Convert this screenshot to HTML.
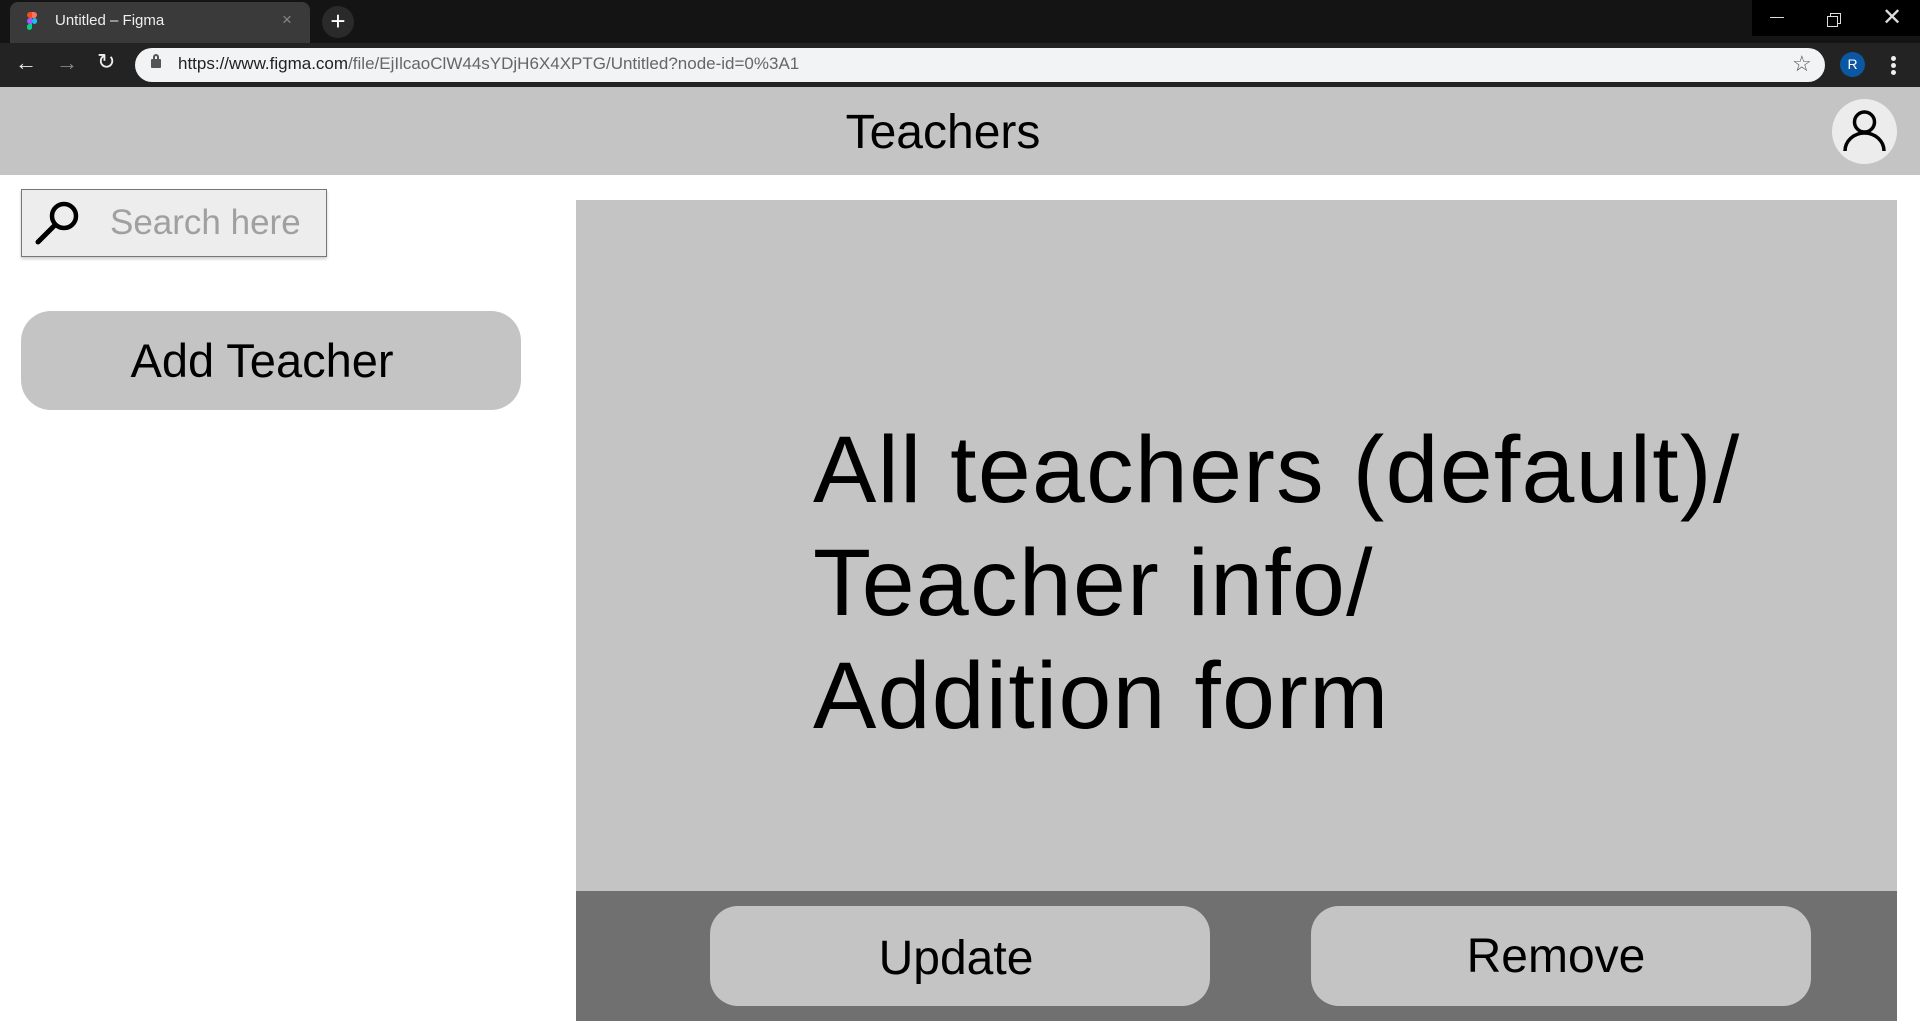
<!DOCTYPE html>
<html><head><meta charset="utf-8"><style>
*{margin:0;padding:0;box-sizing:border-box}
body{width:1920px;height:1032px;background:#fff;font-family:"Liberation Sans",Arial,sans-serif;position:relative;overflow:hidden}
.abs{position:absolute}
</style></head><body>
<div class="abs" style="left:0;top:0;width:1920px;height:43px;background:#141414"></div>
<div class="abs" style="left:10px;top:2px;width:300px;height:41px;background:#3a3a3a;border-radius:8px 8px 0 0"></div>
<div class="abs" style="left:27px;top:12px;width:10px;height:18px">
<div class="abs" style="left:0;top:0;width:5px;height:6px;background:#f24e1e;border-radius:3px 0 0 3px"></div>
<div class="abs" style="left:5px;top:0;width:5px;height:6px;background:#ff7262;border-radius:0 3px 3px 0"></div>
<div class="abs" style="left:0;top:6px;width:5px;height:6px;background:#a259ff;border-radius:3px 0 0 3px"></div>
<div class="abs" style="left:5px;top:6px;width:5px;height:6px;background:#1abcfe;border-radius:3px"></div>
<div class="abs" style="left:0;top:12px;width:5px;height:6px;background:#0acf83;border-radius:3px 0 3px 3px"></div>
</div>
<div class="abs" style="left:55px;top:12px;color:#eee;font-size:15px">Untitled – Figma</div>
<div class="abs" style="left:282px;top:10px;color:#888;font-size:17px">×</div>
<div class="abs" style="left:322px;top:6px;width:32px;height:32px;border-radius:16px;background:#2a2a2a;color:#fff;font-size:26px;text-align:center;line-height:30px">+</div>
<div class="abs" style="left:1752px;top:0;width:168px;height:36px;background:#000"></div>
<div class="abs" style="left:1770px;top:17px;width:14px;height:1px;background:#ddd"></div>
<div class="abs" style="left:1830px;top:13px;width:11px;height:11px;border:1px solid #ddd;background:#000"></div>
<div class="abs" style="left:1827px;top:16px;width:11px;height:11px;border:1px solid #ddd;background:#000"></div>
<div class="abs" style="left:1882px;top:3px;color:#ddd;font-size:24px">✕</div>
<div class="abs" style="left:0;top:43px;width:1920px;height:44px;background:#232323"></div>
<div class="abs" style="left:15px;top:50px;color:#eee;font-size:22px">←</div>
<div class="abs" style="left:56px;top:50px;color:#888;font-size:22px">→</div>
<div class="abs" style="left:97px;top:49px;color:#eee;font-size:22px">↻</div>
<div class="abs" style="left:135px;top:48px;width:1690px;height:34px;background:#f1f3f4;border-radius:17px"></div>
<div class="abs" style="left:151px;top:59px;width:10px;height:9px;background:#555;border-radius:1px"></div>
<div class="abs" style="left:153px;top:54px;width:6px;height:7px;border:2px solid #555;border-radius:3px 3px 0 0"></div>
<div class="abs" style="left:178px;top:54px;font-size:17px;color:#222">https://www.figma.com<span style="color:#666">/file/EjIlcaoClW44sYDjH6X4XPTG/Untitled?node-id=0%3A1</span></div>
<div class="abs" style="left:1792px;top:51px;font-size:22px;color:#555">☆</div>
<div class="abs" style="left:1840px;top:52px;width:25px;height:25px;border-radius:13px;background:#0b57a4;color:#fff;font-size:14px;text-align:center;line-height:25px">R</div>
<div class="abs" style="left:1891px;top:56px;width:5px;height:5px;border-radius:3px;background:#eee;box-shadow:0 7px 0 #eee,0 14px 0 #eee"></div>
<div class="abs" style="left:0;top:87px;width:1920px;height:88px;background:#c4c4c4"></div>
<div class="abs" style="left:0;top:105px;width:1886px;text-align:center;font-size:48px;color:#000">Teachers</div>
<div class="abs" style="left:1832px;top:99px;width:65px;height:65px;border-radius:50%;background:#ececec"></div>
<svg class="abs" style="left:1832px;top:99px" width="65" height="65" viewBox="0 0 65 65"><circle cx="32.5" cy="23" r="10" fill="none" stroke="#000" stroke-width="3.5"/><path d="M13 52 A19.5 18 0 0 1 52 52" fill="none" stroke="#000" stroke-width="3.5"/></svg>
<div class="abs" style="left:21px;top:189px;width:306px;height:68px;background:#ededed;border:1px solid #777;box-shadow:0 2px 3px rgba(0,0,0,.2)"></div>
<svg class="abs" style="left:32px;top:196px" width="55" height="52" viewBox="0 0 55 52"><circle cx="32" cy="20" r="12" fill="none" stroke="#000" stroke-width="4.5"/><path d="M23 29 L6 46" stroke="#000" stroke-width="5" stroke-linecap="round"/></svg>
<div class="abs" style="left:110px;top:203px;font-size:35px;color:#a0a0a0">Search here</div>
<div class="abs" style="left:21px;top:311px;width:500px;height:99px;background:#c4c4c4;border-radius:30px"></div>
<div class="abs" style="left:12px;top:333px;width:500px;text-align:center;font-size:47px;color:#000">Add Teacher</div>
<div class="abs" style="left:576px;top:200px;width:1321px;height:691px;background:#c4c4c4"></div>
<div class="abs" style="left:813px;top:414px;font-size:95px;line-height:113px;color:#000;letter-spacing:1.3px;white-space:nowrap">All teachers (default)/<br>Teacher info/<br>Addition form</div>
<div class="abs" style="left:576px;top:891px;width:1321px;height:130px;background:#707070"></div>
<div class="abs" style="left:710px;top:906px;width:500px;height:100px;background:#c4c4c4;border-radius:28px"></div>
<div class="abs" style="left:706px;top:931px;width:500px;text-align:center;font-size:48px">Update</div>
<div class="abs" style="left:1311px;top:906px;width:500px;height:100px;background:#c4c4c4;border-radius:28px"></div>
<div class="abs" style="left:1306px;top:929px;width:500px;text-align:center;font-size:48px">Remove</div>
</body></html>
